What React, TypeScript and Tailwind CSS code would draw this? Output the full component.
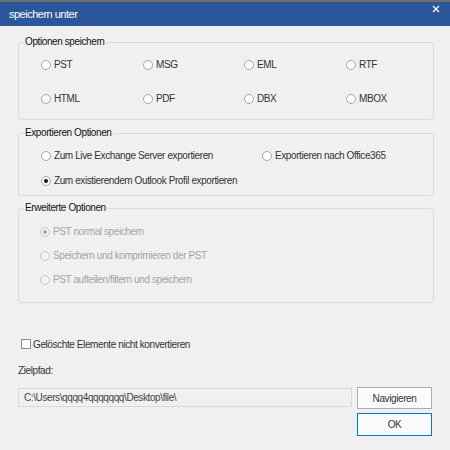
import React from "react";

const font = { fontFamily: '"Liberation Sans", Arial, sans-serif' };

function Radio({ label, checked = false, disabled = false }: { label: string; checked?: boolean; disabled?: boolean }) {
  return (
    <div className="flex items-center h-[16px] gap-[3px]">
      <span
        className={
          "flex items-center justify-center w-[10px] h-[10px] rounded-full border " +
          (disabled ? "border-[#c6c6c6] bg-[#f4f4f4]" : "border-[#a6a6a6] bg-white")
        }
      >
        {checked && (
          <span className={"w-[4px] h-[4px] rounded-full " + (disabled ? "bg-[#a8a8a8]" : "bg-[#111]")} />
        )}
      </span>
      <span className={"text-[10px] tracking-[-0.4px] leading-[16px] " + (disabled ? "text-[#a3a3a3]" : "text-[#333]")}>
        {label}
      </span>
    </div>
  );
}

function Group({ title, children, className }: { title: string; children: React.ReactNode; className?: string }) {
  return (
    <fieldset className={"border border-[#dcdcdc] rounded-[3px] " + (className || "")}>
      <legend className="ml-[5px] px-[1px] text-[10px] tracking-[-0.4px] leading-[12px] text-[#111]">{title}</legend>
      {children}
    </fieldset>
  );
}

export default function App() {
  const formats = [
    ["PST", "MSG", "EML", "RTF"],
    ["HTML", "PDF", "DBX", "MBOX"],
  ];

  return (
    <div className="w-[450px] h-[450px] bg-[#f0f0f0] flex flex-col overflow-hidden" style={font}>
      {/* window frame + title */}
      <div className="h-[2px] bg-[#6f6f6f]" />
      <div className="h-[24px] bg-[#2b579a] flex items-center justify-between pl-[9px] pr-[10px]">
        <span className="text-white text-[11px] tracking-[-0.5px]">speichern unter</span>
        <svg width="8" height="8" viewBox="0 0 8 8" className="mb-[10px]">
          <path d="M1 1L7 7M7 1L1 7" stroke="#ffffff" strokeWidth="1.3" />
        </svg>
      </div>

      <div className="flex flex-col pl-[18px] pr-[16px] pt-[10px]">
        {/* Optionen speichern */}
        <Group title="Optionen speichern">
          <div className="flex flex-col gap-[18px] pl-[22px] pt-[9px] pb-[12px]">
            {formats.map((row, i) => (
              <div key={i} className="grid grid-cols-[102px_101px_102px_auto]">
                {row.map((f) => (
                  <Radio key={f} label={f} />
                ))}
              </div>
            ))}
          </div>
        </Group>

        {/* Exportieren Optionen */}
        <Group title="Exportieren Optionen" className="mt-[7px]">
          <div className="flex flex-col gap-[9px] pl-[22px] pt-[9px] pb-[6px]">
            <div className="flex">
              <div className="w-[221px]">
                <Radio label="Zum Live Exchange Server exportieren" />
              </div>
              <Radio label="Exportieren nach Office365" />
            </div>
            <Radio label="Zum existierendem Outlook Profil exportieren" checked />
          </div>
        </Group>

        {/* Erweiterte Optionen */}
        <Group title="Erweiterte Optionen" className="mt-[6px]">
          <div className="flex flex-col gap-[8px] pl-[21px] pt-[10px] pb-[14px]">
            <Radio label="PST normal speichern" checked disabled />
            <Radio label="Speichern und komprimieren der PST" disabled />
            <Radio label="PST aufteilen/filtern und speichern" disabled />
          </div>
        </Group>
      </div>

      <div className="flex flex-col pl-[18px] pr-[18px]">
        <div className="mt-[33px] flex items-center h-[16px] gap-[2px] pl-[3px]">
          <span className="w-[10px] h-[10px] border border-[#8c8c8c] bg-white" />
          <span className="text-[10px] tracking-[-0.4px] text-[#333]">Gelöschte Elemente nicht konvertieren</span>
        </div>

        <div className="mt-[10px] h-[16px] flex items-center text-[10px] tracking-[-0.4px] text-[#333]">Zielpfad:</div>

        <div className="mt-[9px] flex items-start gap-[5px]">
          <div className="flex-1 mt-[1px] h-[19px] border border-[#d9d9d9] bg-[#f0f0f0] flex items-center pl-[5px] text-[10px] tracking-[-0.4px] text-[#444]">
            C:\Users\qqqq4qqqqqqq\Desktop\file\
          </div>
          <div className="w-[75px] flex flex-col gap-[4px]">
            <button className="h-[22px] border border-[#adadad] bg-[#fbfbfb] text-[10px] tracking-[-0.4px] text-[#333]">
              Navigieren
            </button>
            <button className="h-[23px] border border-[#0078d7] bg-[#fbfbfb] text-[10px] tracking-[-0.4px] text-[#333]">
              OK
            </button>
          </div>
        </div>
      </div>
    </div>
  );
}
